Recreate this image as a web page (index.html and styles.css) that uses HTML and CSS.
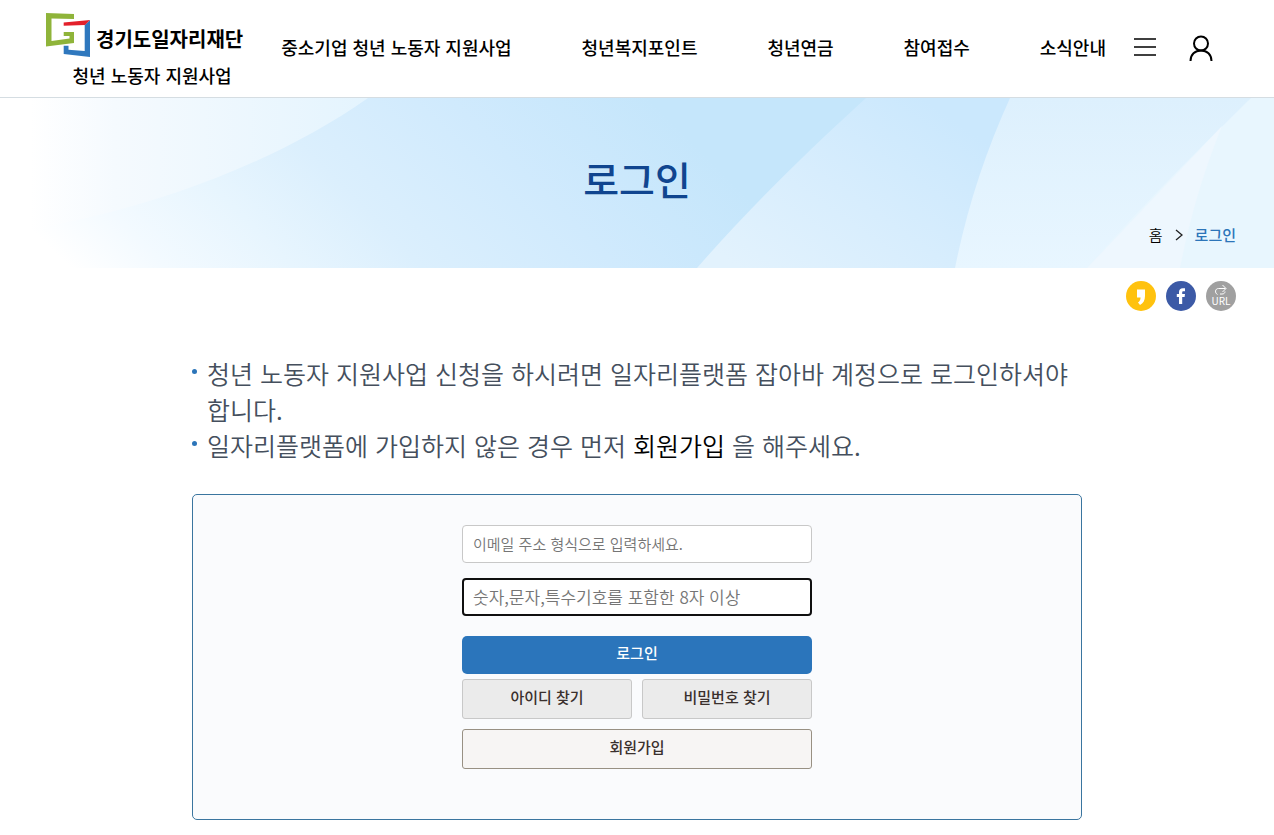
FILE: index.html
```html
<!DOCTYPE html>
<html lang="ko">
<head>
    <meta charset="UTF-8">
    <meta name="viewport" content="width=device-width, initial-scale=1.0">
    <title>로그인</title>
    <link rel="stylesheet" href="styles.css">
</head>
<body>
    <header class="header">
        <a href="#" class="logo">
            <span class="logo-top">
                <svg class="logo-mark" width="46" height="46" viewBox="0 0 46 46" aria-hidden="true">
                    <path fill="#8fb43a" d="M1 1 L29 2 V7 L6.500 6.500 V29 L24.500 26.500 V24 H18.700 V20 H29 V31 L1 34.500 Z"/>
                    <path fill="#2f78be" d="M45 8 V45 L18.700 42 V33.700 H23.500 V37.700 L39.700 39 V13 Z"/>
                    <path fill="#e3202b" d="M18.700 10.500 L45 8 L40 13 L18.700 13.700 Z"/>
                </svg>
                <span class="logo-name">경기도일자리재단</span>
            </span>
            <span class="logo-sub">청년 노동자 지원사업</span>
        </a>
        <nav class="nav">
            <a href="#">중소기업 청년 노동자 지원사업</a>
            <a href="#">청년복지포인트</a>
            <a href="#">청년연금</a>
            <a href="#">참여접수</a>
            <a href="#">소식안내</a>
        </nav>
        <div class="tools">
            <button type="button" class="icon-btn" aria-label="전체메뉴">
                <svg width="24" height="28" viewBox="0 0 24 28" fill="none" stroke="#000" stroke-width="1.600">
                    <path d="M1 5 H23 M1 13 H23 M1 21 H23"/>
                </svg>
            </button>
            <button type="button" class="icon-btn" aria-label="마이페이지">
                <svg width="24" height="28" viewBox="0 0 24 28" fill="none" stroke="#000" stroke-width="2">
                    <circle cx="12" cy="9.500" r="7"/>
                    <path d="M1.500 27 C1.500 20.500 6 16.500 12 16.500 S22.500 20.500 22.500 27"/>
                </svg>
            </button>
        </div>
    </header>

    <section class="visual">
        <svg class="visual-bg" viewBox="0 0 1274 170" preserveAspectRatio="none" aria-hidden="true">
            <defs>
                <linearGradient id="sky" gradientUnits="userSpaceOnUse" x1="40" y1="140" x2="415" y2="-235">
                    <stop offset="0" stop-color="#ffffff"/>
                    <stop offset="0.130" stop-color="#f3faff"/>
                    <stop offset="0.300" stop-color="#e7f5fe"/>
                    <stop offset="0.470" stop-color="#dbeffd"/>
                    <stop offset="0.730" stop-color="#d0eafd"/>
                    <stop offset="1" stop-color="#c5e6fb"/>
                </linearGradient>
                <linearGradient id="left" gradientUnits="userSpaceOnUse" x1="30" y1="0" x2="370" y2="0">
                    <stop offset="0" stop-color="#ffffff"/>
                    <stop offset="0.250" stop-color="#f5fafe"/>
                    <stop offset="1" stop-color="#e4f4fe"/>
                </linearGradient>
                <linearGradient id="mid" gradientUnits="userSpaceOnUse" x1="740" y1="170" x2="880" y2="-30">
                    <stop offset="0" stop-color="#e2f2fd"/>
                    <stop offset="0.500" stop-color="#d7edfd"/>
                    <stop offset="1" stop-color="#cbe8fd"/>
                </linearGradient>
                <linearGradient id="right" x1="0" y1="1" x2="0" y2="0">
                    <stop offset="0" stop-color="#e8f6ff"/>
                    <stop offset="1" stop-color="#ddf0fd"/>
                </linearGradient>
            </defs>
            <rect width="1274" height="170" fill="url(#sky)"/>
            <path fill="url(#left)" d="M0 0 H368 C290 55 190 95 95 118 L0 140 Z"/>
            <path fill="url(#mid)" d="M866 0 C800 60 745 115 697 170 H1274 V0 Z"/>
            <path fill="url(#right)" d="M1010 0 C985 55 967 110 955 170 H1274 V0 Z"/>
            <path fill="#e8f6fe" d="M1251 0 C1190 60 1135 115 1087 170 H1274 V0 Z"/>
            <path fill="#eef7fe" d="M1222 28 L1087 170 H1180 C1190 120 1203 75 1222 28 Z"/>
        </svg>
        <h1 class="visual-title">로그인</h1>
        <div class="breadcrumb">
            <a href="#">홈</a>
            <svg width="8" height="12" viewBox="0 0 8 12" fill="none" stroke="#222" stroke-width="1.300" aria-hidden="true"><path d="M1 1 L7 6 L1 11"/></svg>
            <strong>로그인</strong>
        </div>
    </section>

    <div class="share">
        <a href="#" aria-label="카카오스토리">
            <svg width="30" height="30" viewBox="0 0 30 30">
                <circle cx="15" cy="15" r="15" fill="#ffc20e"/>
                <path fill="#fff" d="M11 8.500 H19 V15 C19 19.500 17 22.500 14 24 L12 21.500 C13.500 20.500 14.500 19 14.600 16.500 H11 Z"/>
            </svg>
        </a>
        <a href="#" aria-label="페이스북">
            <svg width="30" height="30" viewBox="0 0 30 30">
                <circle cx="15" cy="15" r="15" fill="#3c5aa6"/>
                <path fill="#fff" d="M13 23 V16 H10.800 V13 H13 V11 C13 8.500 14.500 7.200 16.800 7.200 H19 V10.200 H17.400 C16.600 10.200 16.200 10.600 16.200 11.400 V13 H19 L18.600 16 H16.200 V23 Z"/>
            </svg>
        </a>
        <a href="#" aria-label="URL 복사">
            <svg width="30" height="30" viewBox="0 0 30 30">
                <circle cx="15" cy="15" r="15" fill="#a0a0a0"/>
                <path fill="none" stroke="#fff" stroke-width="1" d="M11.500 13.500 C8.500 12 9 7.500 12.500 7.500 H19.500 M16.500 4 L20 7.500 L16.500 11 M14 13 H16 C18 13 19 12 19 10.500"/>
                <text x="15" y="24" class="share-url">URL</text>
            </svg>
        </a>
    </div>

    <main class="content">
        <ul class="guide">
            <li>청년 노동자 지원사업 신청을 하시려면 일자리플랫폼 잡아바 계정으로 로그인하셔야 합니다.</li>
            <li>일자리플랫폼에 가입하지 않은 경우 먼저 <a href="#">회원가입</a> 을 해주세요.</li>
        </ul>

        <div class="login-box">
            <form class="login-form">
                <input type="email" class="field" aria-label="이메일" placeholder="이메일 주소 형식으로 입력하세요.">
                <input type="password" class="field field-pw" aria-label="비밀번호" placeholder="숫자,문자,특수기호를 포함한 8자 이상">
                <button type="submit" class="btn btn-login">로그인</button>
                <div class="btn-row">
                    <button type="button" class="btn btn-find">아이디 찾기</button>
                    <button type="button" class="btn btn-find">비밀번호 찾기</button>
                </div>
                <button type="button" class="btn btn-join">회원가입</button>
            </form>
        </div>
    </main>
</body>
</html>
```
FILE: styles.css
```css
* {
    box-sizing: border-box;
}

body {
    margin: 0;
    font-family: "Noto Sans CJK KR", sans-serif;
    font-size: 15px;
    color: #000;
    background: #fff;
}

a {
    color: inherit;
    text-decoration: none;
}

svg {
    display: block;
}

/* header */
.header {
    display: flex;
    align-items: center;
    padding: 0 61px 0 45px;
    border-bottom: 1px solid #d5dde2;
}

.logo {
    display: flex;
    flex-direction: column;
    align-items: center;
    padding: 12px 0 7px;
}

.logo-top {
    display: flex;
    align-items: center;
    gap: 5px;
}

.logo-name {
    font-size: 20px;
    line-height: 30px;
    font-weight: 700;
    padding-top: 7px;
}

.logo-sub {
    font-size: 18px;
    line-height: 30px;
    font-weight: 500;
    padding: 2px 0 0 16px;
}

.nav {
    flex: 1;
    display: flex;
    justify-content: space-between;
    margin: 0 27px 0 38px;
    padding-bottom: 4px;
    font-size: 18px;
    line-height: 30px;
    font-weight: 500;
    white-space: nowrap;
}

.tools {
    display: flex;
    gap: 32px;
}

.icon-btn {
    padding: 0 0 2px;
    border: 0;
    background: none;
    cursor: pointer;
}

/* sub visual */
.visual {
    position: relative;
    padding: 50px 38px 18px;
}

.visual-bg {
    position: absolute;
    top: 0;
    left: 0;
    width: 100%;
    height: 100%;
}

.visual-title {
    position: relative;
    margin: 0;
    font-size: 39px;
    line-height: 60px;
    font-weight: 500;
    color: #10458f;
    text-align: center;
}

.breadcrumb {
    position: relative;
    display: flex;
    justify-content: flex-end;
    align-items: center;
    gap: 12px;
    margin-top: 12px;
    line-height: 30px;
}

.breadcrumb a {
    font-weight: 350;
}

.breadcrumb strong {
    font-weight: 500;
    color: #2c75b9;
}

/* share */
.share {
    display: flex;
    justify-content: flex-end;
    gap: 10px;
    padding: 13px 38px 0;
}

.share-url {
    font-size: 10px;
    fill: #fff;
    text-anchor: middle;
}

/* content */
.content {
    max-width: 890px;
    margin: 44px auto 15px;
}

.guide {
    margin: 0 0 31px;
    padding: 0;
    list-style: none;
    font-size: 25px;
    line-height: 36px;
    font-weight: 350;
    color: #454f5d;
    word-break: keep-all;
}

.guide li {
    position: relative;
    padding-left: 15px;
}

.guide li::before {
    content: "";
    position: absolute;
    top: 14px;
    left: 0;
    width: 5px;
    height: 5px;
    border-radius: 50%;
    background: #2c75b9;
}

.guide a {
    color: #000;
}

.login-box {
    padding: 30px 20px 50px;
    border: 1px solid #3a759f;
    border-radius: 5px;
    background: #fafbfd;
}

.login-form {
    display: flex;
    flex-direction: column;
    max-width: 350px;
    margin: 0 auto;
}

.field {
    width: 100%;
    height: 38px;
    margin-bottom: 15px;
    padding: 0 10px 2px;
    border: 1px solid #c8c8c8;
    border-radius: 4px;
    background: #fff;
    font-family: inherit;
    font-size: 15px;
    font-weight: 350;
}

.field::placeholder {
    color: #757575;
}

.field-pw {
    margin-bottom: 20px;
    padding: 0 9px 2px;
    border: 2px solid #101010;
    font-size: 17px;
}

.btn {
    height: 40px;
    padding: 0 0 6px;
    border: 1px solid #c8c8c8;
    border-radius: 3px;
    font-family: inherit;
    font-size: 15px;
    font-weight: 500;
    color: #3a302d;
    cursor: pointer;
}

.btn-login {
    height: 38px;
    border: 0;
    border-radius: 5px;
    background: #2b75bb;
    color: #fff;
}

.btn-row {
    display: flex;
    gap: 10px;
    margin: 5px 0 10px;
}

.btn-find {
    flex: 1;
    background: #ebebeb;
}

.btn-join {
    border-color: #989083;
    background: #f7f5f4;
}
```
